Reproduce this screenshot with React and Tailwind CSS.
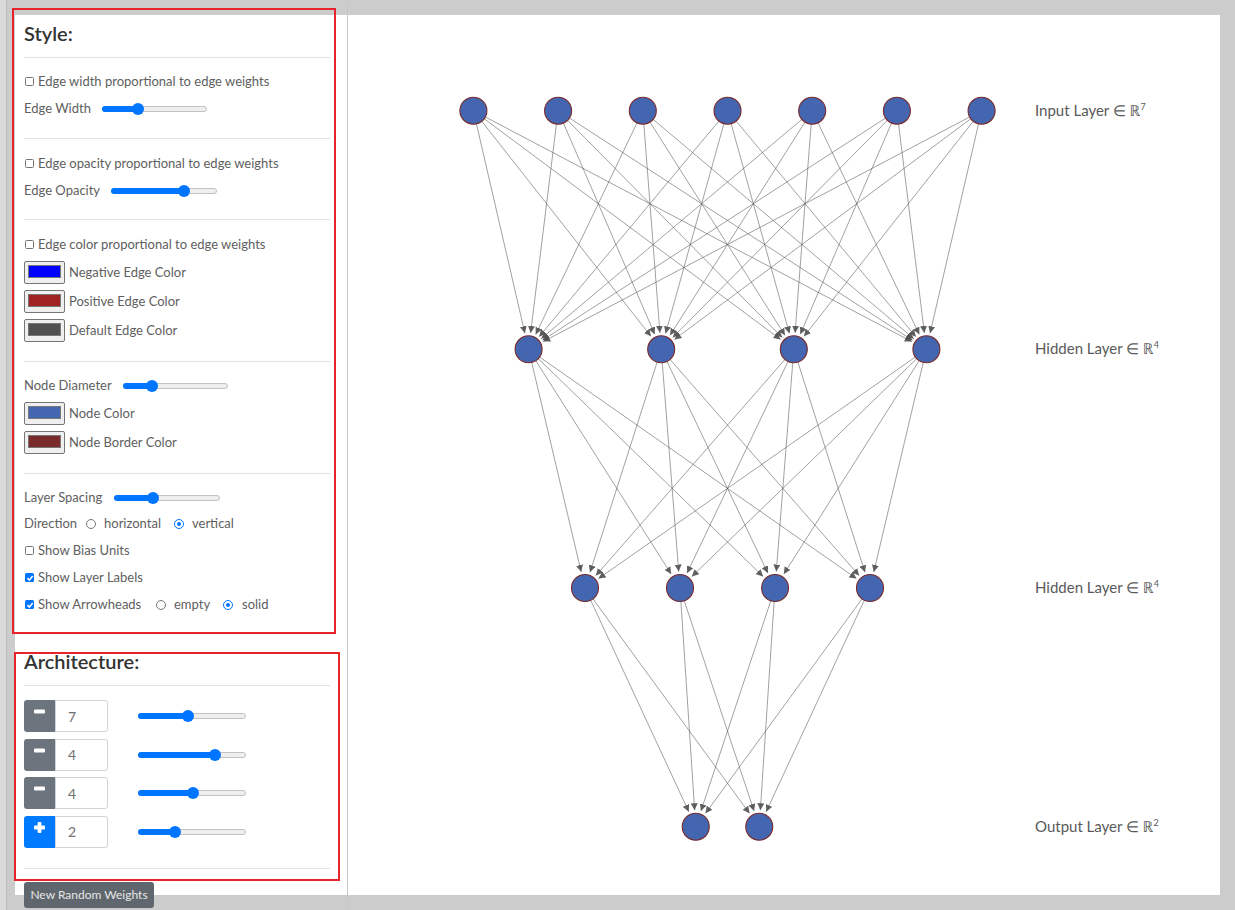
import React from "react";

function Check({ checked }) {
  if (checked) {
    return (
      <span className="w-[9px] h-[9px] rounded-[1.5px] bg-[#0075ff] flex items-center justify-center shrink-0">
        <svg width="8" height="8" viewBox="0 0 10 10">
          <path d="M1.8 5.2 L4.2 7.6 L8.4 2.6" stroke="white" strokeWidth="1.9" fill="none" />
        </svg>
      </span>
    );
  }
  return <span className="w-[9px] h-[9px] rounded-[1.5px] border border-[#767676] bg-white shrink-0" />;
}

function Radio({ checked }) {
  if (checked) {
    return (
      <span className="w-[10px] h-[10px] rounded-full border-[1.5px] border-[#0075ff] bg-white flex items-center justify-center shrink-0">
        <span className="w-[4px] h-[4px] rounded-full bg-[#0075ff]" />
      </span>
    );
  }
  return <span className="w-[10px] h-[10px] rounded-full border border-[#767676] bg-white shrink-0" />;
}

function Slider({ cls, pos }) {
  return (
    <div className={cls}>
      <div className="absolute left-0 right-0 top-[3px] h-[6px] rounded-full bg-[#efefef] border border-[#c2c2c2]" />
      <div className="absolute left-0 top-[3px] h-[6px] rounded-full bg-[#0075ff]" style={{ width: pos }} />
      <div className="absolute top-0 w-[12px] h-[12px] rounded-full bg-[#0075ff]" style={{ left: pos - 6 }} />
    </div>
  );
}

function CheckRow({ label, checked }) {
  return (
    <div className="h-[27px] flex items-center">
      <span className="ml-[1px] mr-[4px] flex">
        <Check checked={checked} />
      </span>
      <span className="text-[13px] text-[#606060]">{label}</span>
    </div>
  );
}

function Swatch({ color, label }) {
  return (
    <div className="h-[29px] flex items-center">
      <div className="w-[41px] h-[23px] rounded-[2px] border border-[#767676] bg-[#efefef] pt-[3px] pl-[3px]">
        <div className="w-[33px] h-[13px] border border-[#777]" style={{ background: color }} />
      </div>
      <span className="ml-[4px] text-[13px] text-[#606060]">{label}</span>
    </div>
  );
}

function MinusIcon() {
  return (
    <svg width="11" height="11" viewBox="0 0 11 11">
      <rect x="0" y="3.6" width="11" height="3.8" rx="1" fill="white" />
    </svg>
  );
}

function PlusIcon() {
  return (
    <svg width="11" height="11" viewBox="0 0 11 11">
      <rect x="3.6" y="0" width="3.8" height="11" rx="1" fill="white" />
      <rect x="0" y="3.6" width="11" height="3.8" rx="1" fill="white" />
    </svg>
  );
}

function ArchRow({ value, plus, pos }) {
  return (
    <div className="h-[32px] flex items-center">
      <div
        className={
          plus
            ? "w-[31px] h-[32px] rounded-l-[3px] bg-[#007bff] flex justify-center pt-[6px]"
            : "w-[31px] h-[32px] rounded-l-[3px] bg-[#6c757d] flex justify-center pt-[6px]"
        }
      >
        {plus ? <PlusIcon /> : <MinusIcon />}
      </div>
      <div className="w-[53px] h-[32px] border border-[#ced4da] rounded-r-[3px] flex items-center pl-[12px] text-[14px] text-[#707070]">
        {value}
      </div>
      <div className="ml-[30px] flex">
        <Slider cls="relative w-[108px] h-[12px]" pos={pos} />
      </div>
    </div>
  );
}

function Sidebar() {
  return (
    <div className="ml-[8px] w-[332px] h-[880px] bg-white pl-[9px] pr-[17px] pt-[4px]">
      <h2 className="h-[28px] leading-[28px] text-[20px] font-semibold text-[#333]">Style:</h2>
      <div className="mt-[10px] border-t border-[#e3e3e3]" />

      <div className="mt-[10px]">
        <CheckRow label="Edge width proportional to edge weights" />
        <div className="h-[27px] flex items-center">
          <span className="w-[78px] text-[13px] text-[#606060]">Edge Width</span>
          <Slider cls="relative w-[105px] h-[12px]" pos={36} />
        </div>
      </div>
      <div className="mt-[16px] border-t border-[#e3e3e3]" />

      <div className="mt-[11px]">
        <CheckRow label="Edge opacity proportional to edge weights" />
        <div className="h-[27px] flex items-center">
          <span className="w-[87px] text-[13px] text-[#606060]">Edge Opacity</span>
          <Slider cls="relative w-[106px] h-[12px]" pos={73} />
        </div>
      </div>
      <div className="mt-[15px] border-t border-[#e3e3e3]" />

      <div className="mt-[11px]">
        <CheckRow label="Edge color proportional to edge weights" />
        <Swatch color="#0000ff" label="Negative Edge Color" />
        <Swatch color="#a02222" label="Positive Edge Color" />
        <Swatch color="#505050" label="Default Edge Color" />
      </div>
      <div className="mt-[16px] border-t border-[#e3e3e3]" />

      <div className="mt-[10px]">
        <div className="h-[27px] flex items-center">
          <span className="w-[99px] text-[13px] text-[#606060]">Node Diameter</span>
          <Slider cls="relative w-[105px] h-[12px]" pos={29} />
        </div>
        <Swatch color="#4466b0" label="Node Color" />
        <Swatch color="#7a2a2a" label="Node Border Color" />
      </div>
      <div className="mt-[16px] border-t border-[#e3e3e3]" />

      <div className="mt-[10px]">
        <div className="h-[27px] flex items-center">
          <span className="w-[90px] text-[13px] text-[#606060]">Layer Spacing</span>
          <Slider cls="relative w-[106px] h-[12px]" pos={39} />
        </div>
        <div className="h-[26px] flex items-center text-[13px] text-[#606060]">
          <span className="w-[62px]">Direction</span>
          <Radio />
          <span className="ml-[8px] w-[70px]">horizontal</span>
          <Radio checked />
          <span className="ml-[8px]">vertical</span>
        </div>
        <CheckRow label="Show Bias Units" />
        <CheckRow label="Show Layer Labels" checked />
        <div className="h-[27px] flex items-center text-[13px] text-[#606060]">
          <span className="ml-[1px] mr-[4px] flex">
            <Check checked />
          </span>
          <span className="w-[118px]">Show Arrowheads</span>
          <Radio />
          <span className="ml-[8px] w-[49px]">empty</span>
          <Radio checked />
          <span className="ml-[9px]">solid</span>
        </div>
      </div>

      <h2 className="mt-[29px] h-[28px] leading-[28px] text-[20px] font-semibold text-[#333]">Architecture:</h2>
      <div className="mt-[10px] border-t border-[#e3e3e3]" />
      <div className="mt-[14px] flex flex-col gap-[6.5px]">
        <ArchRow value="7" pos={50} />
        <ArchRow value="4" pos={77} />
        <ArchRow value="4" pos={55} />
        <ArchRow value="2" plus pos={37} />
      </div>
      <div className="mt-[20.5px] border-t border-[#e3e3e3]" />
      <button className="mt-[13px] w-[130px] h-[26px] rounded-[3px] bg-[#5f666d] text-[#e6e6e6] text-[12px] flex items-center justify-center">
        New Random Weights
      </button>
    </div>
  );
}

const CX = 727.5;
const LAYERS = [
  { y: 110.7, xs: [-3, -2, -1, 0, 1, 2, 3].map((k) => CX + k * 84.7), name: "Input Layer", dim: "7" },
  { y: 349.3, xs: [-1.5, -0.5, 0.5, 1.5].map((k) => CX + k * 132.6), name: "Hidden Layer", dim: "4" },
  { y: 588, xs: [-1.5, -0.5, 0.5, 1.5].map((k) => CX + k * 95), name: "Hidden Layer", dim: "4" },
  { y: 826.7, xs: [-0.5, 0.5].map((k) => CX + k * 63.5), name: "Output Layer", dim: "2" },
];
const R = 13.5;

function Network() {
  const edges = [];
  for (let l = 0; l < LAYERS.length - 1; l++) {
    const a = LAYERS[l];
    const b = LAYERS[l + 1];
    a.xs.forEach((x1, i) => {
      b.xs.forEach((x2, j) => {
        const dx = x2 - x1;
        const dy = b.y - a.y;
        const len = Math.sqrt(dx * dx + dy * dy);
        const d = R + 3;
        edges.push({
          key: `${l}-${i}-${j}`,
          x1,
          y1: a.y,
          x2: x2 - (dx / len) * d,
          y2: b.y - (dy / len) * d,
        });
      });
    });
  }
  return (
    <svg width="872" height="880" viewBox="348 15 872 880">
      <defs>
        <marker
          id="arrowhead"
          viewBox="0 -5 10 10"
          refX="10"
          refY="0"
          markerWidth="7"
          markerHeight="7"
          markerUnits="userSpaceOnUse"
          orient="auto"
        >
          <path d="M0,-5L10,0L0,5Z" fill="#505050" fillOpacity="0.9" />
        </marker>
      </defs>
      {edges.map((e) => (
        <line
          key={e.key}
          x1={e.x1}
          y1={e.y1}
          x2={e.x2}
          y2={e.y2}
          stroke="#505050"
          strokeOpacity="0.6"
          strokeWidth="0.9"
          markerEnd="url(#arrowhead)"
        />
      ))}
      {LAYERS.map((L, li) =>
        L.xs.map((x, i) => (
          <circle key={`${li}-${i}`} cx={x} cy={L.y} r={R} fill="#4466b0" stroke="#7a2a2a" strokeWidth="1.1" />
        ))
      )}
      {LAYERS.map((L, li) => (
        <text key={`t${li}`} x="1035" y={L.y + 5} fontSize="15" fill="#5a5a5a">
          {L.name} ∈ ℝ
          <tspan fontSize="9" dy="-6">
            {L.dim}
          </tspan>
        </text>
      ))}
    </svg>
  );
}

export default function App() {
  return (
    <div className="relative w-[1235px] h-[910px] overflow-hidden bg-[#cccccc] flex font-['Lato','Noto_Sans',sans-serif]">
      <div className="w-[7px] h-full bg-[#d9d9d9] border-r border-[#b9b9b9]" />
      <div className="w-[341px] h-full border-r border-[#c6c6c6] pt-[15px]">
        <Sidebar />
      </div>
      <div className="pt-[15px]">
        <div className="w-[872px] h-[880px] bg-white">
          <Network />
        </div>
      </div>
      <div className="absolute left-[12px] top-[8px] w-[324px] h-[626px] border-2 border-[#e8232b] pointer-events-none" />
      <div className="absolute left-[14px] top-[652px] w-[326px] h-[229px] border-2 border-[#e8232b] pointer-events-none" />
    </div>
  );
}
